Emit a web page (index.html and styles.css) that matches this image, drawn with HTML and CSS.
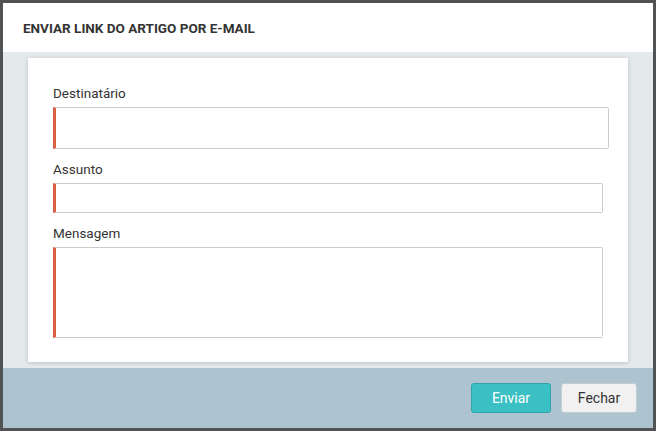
FILE: index.html
```html
<!DOCTYPE html>
<html lang="pt">
<head>
<meta charset="utf-8">
<title>Enviar link do artigo por e-mail</title>
<link rel="stylesheet" href="styles.css">
</head>
<body>
<div class="backdrop">
  <div class="modal">
    <div class="modal-header">
      <h1 class="modal-title">ENVIAR LINK DO ARTIGO POR E-MAIL</h1>
    </div>
    <div class="modal-body">
      <form class="card">
        <label class="field-label">Destinatário</label>
        <input class="field field-to" type="text">
        <label class="field-label">Assunto</label>
        <input class="field field-subject" type="text">
        <label class="field-label">Mensagem</label>
        <textarea class="field field-message"></textarea>
      </form>
    </div>
    <div class="modal-footer">
      <button class="btn btn-primary" type="button">Enviar</button>
      <button class="btn btn-default" type="button">Fechar</button>
    </div>
  </div>
</div>
</body>
</html>
```
FILE: styles.css
```css
html, body {
  margin: 0;
  padding: 0;
}
body {
  width: 656px;
  height: 431px;
  overflow: hidden;
  background: #505254;
  font-family: Roboto, "Liberation Sans", Arial, sans-serif;
  color: #333;
}
.backdrop {
  padding: 3px;
}
.modal {
  width: 650px;
  height: 425px;
  display: flex;
  flex-direction: column;
  background: #fff;
}
.modal-header {
  height: 49px;
  display: flex;
  align-items: center;
  padding-left: 20px;
  padding-top: 1px;
  box-sizing: border-box;
  background: #fff;
}
.modal-title {
  margin: 0;
  font-size: 13.5px;
  font-weight: 700;
  color: #333;
  letter-spacing: 0;
}
.modal-body {
  background: #e4e9ec;
  padding: 6px 25px 6px 25px;
  height: 316px;
  box-sizing: border-box;
}
.card {
  background: #fff;
  height: 304px;
  box-sizing: border-box;
  padding: 27px 0 0 25px;
  display: flex;
  flex-direction: column;
  align-items: flex-start;
  box-shadow: 0 1px 4px rgba(0, 0, 0, 0.18);
  margin: 0;
}
.field-label {
  font-size: 13.5px;
  line-height: 16px;
  color: #333;
  margin-bottom: 6px;
}
.field {
  display: block;
  box-sizing: border-box;
  border: 1px solid #cccccc;
  border-left: 3px solid #d9603f;
  border-radius: 0 2px 2px 0;
  background: #fff;
  padding: 4px 8px;
  font-family: inherit;
  font-size: 13px;
  outline: none;
  margin: 0 0 12px 0;
}
.field-to {
  width: 556px;
  height: 42px;
}
.field-subject {
  width: 550px;
  height: 30px;
  margin-bottom: 12px;
}
.field-message {
  width: 550px;
  height: 91px;
  resize: none;
  margin-bottom: 0;
}
.modal-footer {
  flex: 1;
  background: #adc4d0;
  display: flex;
  justify-content: flex-end;
  align-items: flex-start;
  padding: 15px 16px 0 0;
  gap: 10px;
}
.btn {
  height: 30px;
  box-sizing: border-box;
  border-radius: 3px;
  font-family: inherit;
  font-size: 14px;
  padding: 0;
  cursor: pointer;
}
.btn-primary {
  width: 80px;
  background: #3bc0c3;
  border: 1px solid #2ea5a8;
  color: #fff;
}
.btn-default {
  width: 76px;
  background: #f1f1f1;
  border: 1px solid #c3ccd1;
  color: #333;
}
```
